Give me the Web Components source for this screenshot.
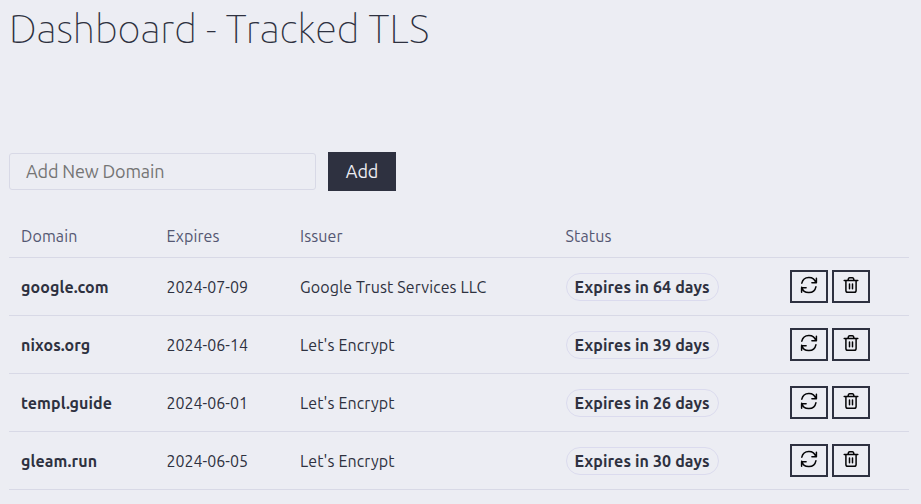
<!DOCTYPE html>
<html lang="en"><head><meta charset="utf-8"><title>Dashboard - Tracked TLS</title>
<style>
html,body{margin:0;background:#ecedf3;overflow:hidden}
body{height:504px;font:16px/24px Ubuntu,"Noto Sans",sans-serif;letter-spacing:.12px;color:#2e3140}
</style></head><body>
<tls-dashboard></tls-dashboard>
<script>
class IconButton extends HTMLElement{
 connectedCallback(){
  const refresh='<path d="M15.9 6.8A7.3 7.3 0 0 0 1.8 7.2M1.7 11.2A7.3 7.3 0 0 0 15.9 10.8M16.4 2.3V6.8H11.9M1.6 16.2V11.7H6.1"/>';
  const trash='<path d="M2.2 4.5H15.8M6 4.3L6.5 2.5Q6.9 1.7 7.7 1.7H10.3Q11.1 1.7 11.5 2.5L12 4.3M3.9 4.8V14.4Q3.9 16.2 5.7 16.2H12.3Q14.1 16.2 14.1 14.4V4.8M7.5 7.9V12.8M10.5 7.9V12.8"/>';
  this.attachShadow({mode:'open'}).innerHTML=`<style>:host{display:block}button{box-sizing:border-box;display:flex;justify-content:center;width:38px;height:33px;padding:4px 0 0;border:2px solid #2e3140;background:none}svg{width:18px;height:18px;fill:none;stroke:#050507;stroke-width:1.5;stroke-linecap:round;stroke-linejoin:round}</style><button aria-label="${this.getAttribute('kind')}"><svg viewBox="0 0 18 18">${this.getAttribute('kind')==='refresh'?refresh:trash}</svg></button>`;
 }
}
class StatusBadge extends HTMLElement{
 connectedCallback(){
  this.attachShadow({mode:'open'}).innerHTML='<style>:host{display:flex;box-sizing:border-box;width:153px;height:28px;padding-left:7.5px;border:1px solid #dbdbee;border-radius:14px;font-weight:700;line-height:26px;white-space:nowrap}</style><slot></slot>';
 }
}
class DomainRow extends HTMLElement{
 connectedCallback(){
  const [d,e,i,s]=this.getAttribute('data').split('|');
  this.attachShadow({mode:'open'}).innerHTML=`<style>:host{display:grid;box-sizing:border-box;height:58px;grid-template-columns:145.5px 133.5px 266px 224px auto;padding-left:12px;align-items:center;border-bottom:1px solid #d8d9e6}.b{font-weight:700;letter-spacing:.1px}.e{letter-spacing:0}.a{display:flex;gap:4px}</style>
  <div class="b">${d}</div><div class="e">${e}</div><div>${i}</div>
  <status-badge>${s}</status-badge><div class="a"><icon-button kind="refresh"></icon-button><icon-button kind="delete"></icon-button></div>`;
 }
}
class AddForm extends HTMLElement{
 connectedCallback(){
  this.attachShadow({mode:'open'}).innerHTML=`<style>:host{display:flex;align-items:center;gap:12px;height:39px;font-size:18px;letter-spacing:-.15px}
  .field{box-sizing:border-box;width:307px;height:37px;padding-left:16px;border:1px solid #d8d9e6;border-radius:3px;color:#757575;line-height:35px}
  button{width:68px;height:39px;padding:0 0 1px;border:0;background:#2e3140;color:#ecedf3;font:inherit;letter-spacing:inherit;line-height:38px}</style>
  <div class="field" role="textbox">Add New Domain</div><button>Add</button>`;
 }
}
class TlsDashboard extends HTMLElement{
 connectedCallback(){
  const rows=['google.com|2024-07-09|Google Trust Services LLC|Expires in 64 days','nixos.org|2024-06-14|Let\'s Encrypt|Expires in 39 days','templ.guide|2024-06-01|Let\'s Encrypt|Expires in 26 days','gleam.run|2024-06-05|Let\'s Encrypt|Expires in 30 days'];
  this.attachShadow({mode:'open'}).innerHTML=`<style>:host{display:block;width:900px;padding-left:9px}
  h1{margin:0;height:152px;font-family:"Ubuntu Thin",Ubuntu,"Noto Sans",sans-serif;font-size:40px;font-weight:100;line-height:58px;letter-spacing:-.09px}
  .head{display:grid;box-sizing:border-box;height:67px;grid-template-columns:145.5px 133.5px 265.5px auto;padding:33px 0 0 12px;border-bottom:1px solid #d8d9e6;color:#545772}</style>
  <h1>Dashboard - Tracked TLS</h1><add-form></add-form>
  <div class="head"><div>Domain</div><div>Expires</div><div>Issuer</div><div>Status</div></div>
  ${rows.map(r=>`<domain-row data="${r}"></domain-row>`).join('')}`;
 }
}
customElements.define('icon-button',IconButton);
customElements.define('status-badge',StatusBadge);
customElements.define('domain-row',DomainRow);
customElements.define('add-form',AddForm);
customElements.define('tls-dashboard',TlsDashboard);
</script></body></html>
